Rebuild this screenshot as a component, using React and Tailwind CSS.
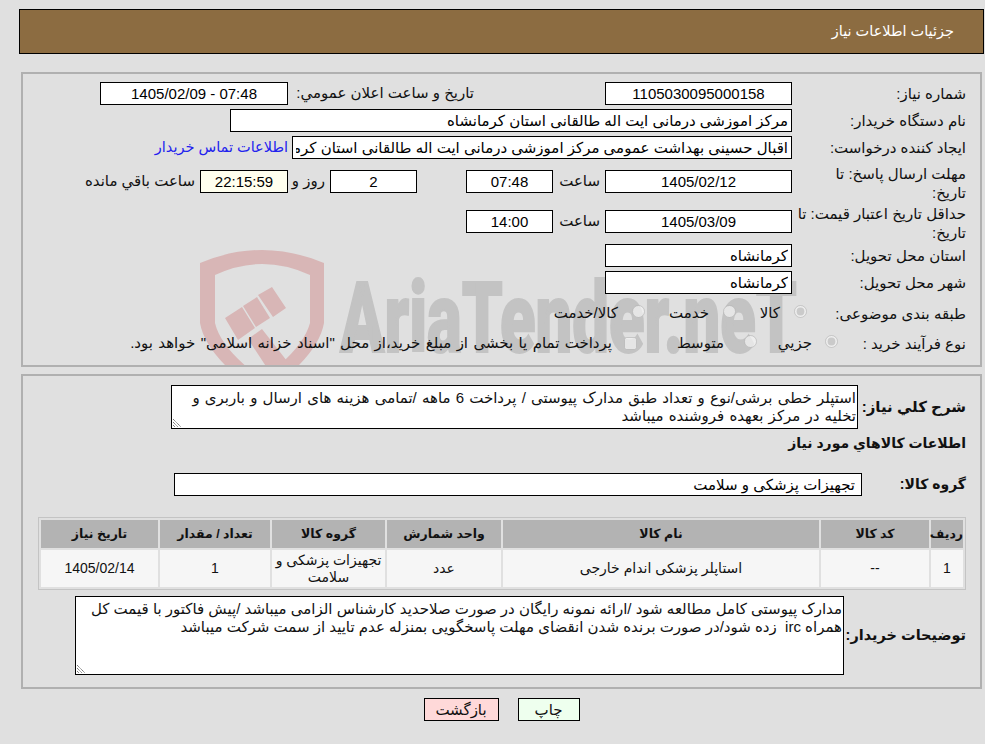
import React from "react";

const font = { fontFamily: '"Liberation Sans", "DejaVu Sans", sans-serif' };

const Box = ({ value, className = "", align = "text-center", bg = "bg-white" }) => (
  <input
    readOnly
    value={value}
    className={`h-[23px] border border-black px-[3px] text-black outline-none ${bg} ${align} ${className}`}
  />
);

const Label = ({ children, className = "w-[174px]" }) => (
  <div className={`shrink-0 leading-[19px] ${className}`}>{children}</div>
);

const Area = ({ value, className = "" }) => (
  <div className="relative">
    <textarea
      readOnly
      value={value}
      className={`block resize-none border border-black bg-white px-px pt-[3px] pb-0 leading-[18px] outline-none ${className}`}
    />
    <svg viewBox="0 0 9 9" className="pointer-events-none absolute bottom-[2px] left-[2px] size-[9px]">
      <path d="M0 1 L8 9 M0 4 L5 9 M0 7 L2 9" stroke="#666" strokeWidth="1" strokeDasharray="1.2 0.6" fill="none" />
    </svg>
  </div>
);

const Watermark = () => (
  <svg
    viewBox="0 0 610 135"
    className="absolute left-[167px] top-[171px] h-[135px] w-[610px]"
  >
    <path
      d="M10 18 Q72 -8 134 18 L134 78 Q128 112 72 150 Q16 112 10 78 Z M25 30 L25 78 Q31 104 72 134 Q113 104 120 78 L120 30 Q72 8 25 30 Z"
      fill="#d8b6b6"
      fillRule="evenodd"
    />
    <path
      d="M35 73 L52 62 L65 83 L48 95 Z M53 61 L67 52 L80 73 L66 82 Z M68 50 L82 42 L96 63 L83 72 Z M58 94 L72 84 L104 125 L85 135 Z"
      fill="#d8b6b6"
    />
    <text
      x="150"
      y="107"
      direction="ltr"
      textLength="457"
      lengthAdjust="spacingAndGlyphs"
      fontFamily="Roboto, sans-serif"
      fontWeight="900"
      fontSize="98"
      fill="#c3c3c3"
      stroke="#c3c3c3"
      strokeWidth="2"
    >
      AriaTender.neT
    </text>
  </svg>
);

const headers = ["ردیف", "کد کالا", "نام کالا", "واحد شمارش", "گروه کالا", "تعداد / مقدار", "تاریخ نیاز"];

export default function App() {
  return (
    <div dir="rtl" style={font} className="min-h-[744px] overflow-hidden bg-[#e0e0e0] pt-[9px] pl-[19px] pr-px text-[15px] text-[#111]">
      {/* عنوان */}
      <div className="flex h-[45px] items-center border border-black bg-[#8c6c41] pr-[29px] text-[14.5px] text-white">
        جزئیات اطلاعات نیاز
      </div>

      {/* مشخصات نیاز */}
      <div className="relative mx-[2px] mt-[18px] h-[295px] overflow-hidden border-2 border-[#b0b0b0] pr-[14px] pt-[8px]">
        <Watermark />
        <div className="relative">
          <div className="flex h-[23px] items-center">
            <Label>شماره نیاز:</Label>
            <Box value="1105030095000158" className="w-[187px]" />
            <div className="w-[317px] pr-[131px]">تاریخ و ساعت اعلان عمومي:</div>
            <Box value="07:48 - 1405/02/09" className="w-[188px]" />
          </div>
          <div className="mt-[4px] flex h-[23px] items-center">
            <Label>نام دستگاه خریدار:</Label>
            <Box value="مرکز اموزشی درمانی ایت اله طالقانی استان کرمانشاه" align="text-right" className="w-[562px]" />
          </div>
          <div className="mt-[4px] flex h-[23px] items-center">
            <Label>ایجاد کننده درخواست:</Label>
            <Box value="اقبال حسینی بهداشت عمومی مرکز اموزشی درمانی ایت اله طالقانی استان کرمانشاه" align="text-right" className="w-[500px]" />
            <a className="mr-[4px] text-[14.5px] text-[#2222ee]">اطلاعات تماس خریدار</a>
          </div>
          <div className="mt-[11px] flex h-[22px] items-center">
            <Label className="w-[174px] pt-[4px]">
              مهلت ارسال پاسخ: تا
              <br />
              تاریخ:
            </Label>
            <Box value="1405/02/12" className="h-[22px] w-[187px]" />
            <div className="w-[52px] pr-[5px]">ساعت</div>
            <Box value="07:48" className="h-[22px] w-[87px]" />
            <div className="w-[49px]" />
            <Box value="2" className="h-[22px] w-[87px]" />
            <div className="w-[42px] pr-[5px]">روز و</div>
            <Box value="22:15:59" bg="bg-[#ffffee]" className="h-[22px] w-[88px]" />
            <div className="pr-[5px]">ساعت باقي مانده</div>
          </div>
          <div className="mt-[18px] flex h-[23px] items-center">
            <Label className="w-[174px] pt-[2px]">حداقل تاریخ اعتبار قیمت: تا تاریخ:</Label>
            <Box value="1405/03/09" className="w-[187px]" />
            <div className="w-[52px] pr-[5px]">ساعت</div>
            <Box value="14:00" className="w-[87px]" />
          </div>
          <div className="mt-[11px] flex h-[23px] items-center">
            <Label>استان محل تحویل:</Label>
            <Box value="کرمانشاه" align="text-right" className="w-[187px]" />
          </div>
          <div className="mt-[4px] flex h-[23px] items-center">
            <Label>شهر محل تحویل:</Label>
            <Box value="کرمانشاه" align="text-right" className="w-[187px]" />
          </div>
          <div className="mt-[9px] flex h-[21px] items-center">
            <Label className="w-[159px]">طبقه بندی موضوعی:</Label>
            <input type="radio" disabled defaultChecked name="a" className="m-0 mb-[5px] size-[13px]" />
            <span className="mr-[14px] w-[44px]">کالا</span>
            <input type="radio" disabled name="a" className="m-0 mb-[5px] size-[13px]" />
            <span className="mr-[14px] w-[64px]">خدمت</span>
            <input type="radio" disabled name="a" className="m-0 mb-[5px] size-[13px]" />
            <span className="mr-[14px]">کالا/خدمت</span>
          </div>
          <div className="mt-[9px] flex h-[21px] items-center">
            <Label className="w-[128px]">نوع فرآیند خرید :</Label>
            <input type="radio" disabled defaultChecked name="b" className="m-0 mb-[5px] size-[13px]" />
            <span className="mr-[13px] w-[55px]">جزيي</span>
            <input type="radio" disabled name="b" className="m-0 mb-[5px] size-[13px]" />
            <span className="mr-[20px] w-[87px]">متوسط</span>
            <input type="checkbox" disabled className="m-0 size-[13px]" />
            <span className="mr-[12px] whitespace-nowrap [word-spacing:1.2px]">پرداخت تمام یا بخشی از مبلغ خرید،از محل "اسناد خزانه اسلامی" خواهد بود.</span>
          </div>
        </div>
      </div>

      {/* شرح نیاز و کالاها */}
      <div className="mx-[2px] mt-[7px] h-[315px] border-2 border-[#b0b0b0] pr-[14px] pt-[9px]">
        <div className="flex items-center">
          <div className="w-[108px] shrink-0 font-bold">شرح کلي نیاز:</div>
          <Area
            value={"استپلر خطی برشی/نوع و تعداد طبق مدارک پیوستی / پرداخت 6 ماهه /تمامی هزینه های ارسال و باربری و\nتخلیه در مرکز بعهده فروشنده میباشد"}
            className="h-[44px] w-[687px] [word-spacing:1px]"
          />
        </div>
        <div className="mt-[5px] h-[19px] text-[14px] font-bold leading-[19px]">اطلاعات کالاهاي مورد نياز</div>
        <div className="mt-[20px] flex h-[23px] items-center">
          <div className="w-[104px] shrink-0 text-[14px] font-bold">گروه کالا:</div>
          <Box value="تجهیزات پزشکی و سلامت" align="text-right" className="w-[688px] pr-[6px]" />
        </div>
        <table className="mt-[21px] w-[928px] table-fixed border-separate border-spacing-[2px] border border-[#c4c4c4] text-center text-[12.5px]">
          <colgroup>
            <col className="w-[32px]" />
            <col className="w-[108px]" />
            <col className="w-[316px]" />
            <col className="w-[114px]" />
            <col className="w-[113px]" />
            <col className="w-[110px]" />
            <col className="w-[117px]" />
          </colgroup>
          <thead>
            <tr>
              {headers.map((h) => (
                <th key={h} className="h-[28px] bg-[#b3b3b3] p-0 font-bold">{h}</th>
              ))}
            </tr>
          </thead>
          <tbody>
            <tr className="text-[14px]">
              <td className="h-[37px] bg-[#f6f6f6] p-0">1</td>
              <td className="bg-[#f6f6f6] p-0">--</td>
              <td className="bg-[#f6f6f6] p-0">استاپلر پزشکی اندام خارجی</td>
              <td className="bg-[#f6f6f6] p-0">عدد</td>
              <td className="bg-[#f6f6f6] p-0 leading-[17px]">
                تجهیزات پزشکی و
                <br />
                سلامت
              </td>
              <td className="bg-[#f6f6f6] p-0">1</td>
              <td className="bg-[#f6f6f6] p-0">1405/02/14</td>
            </tr>
          </tbody>
        </table>
        <div className="mt-[6px] flex items-center">
          <div className="w-[122px] shrink-0 whitespace-nowrap text-[14.5px] font-bold">توضیحات خریدار:</div>
          <Area
            value="مدارک پیوستی کامل مطالعه شود /ارائه نمونه رایگان در صورت صلاحدید کارشناس الزامی میباشد /پیش فاکتور با قیمت کل همراه irc  زده شود/در صورت برنده شدن انقضای مهلت پاسخگویی بمنزله عدم تایید از سمت شرکت میباشد"
            className="h-[79px] w-[769px]"
          />
        </div>
      </div>

      {/* دکمه‌ها */}
      <div className="mt-[9px] flex justify-center gap-[19px]">
        <button className="h-[23px] w-[62px] border border-black bg-[#eeffee]">چاپ</button>
        <button className="h-[23px] w-[75px] border border-black bg-[#ffd9d9]">بازگشت</button>
      </div>
    </div>
  );
}
